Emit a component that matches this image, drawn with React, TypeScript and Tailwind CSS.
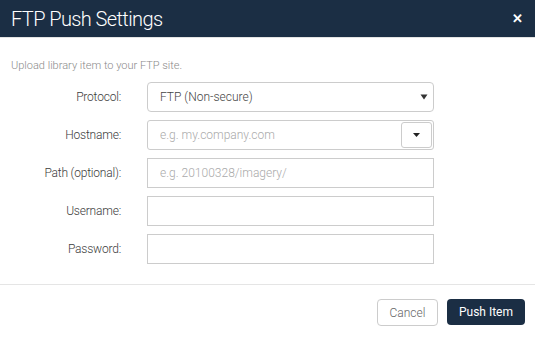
import React from "react";

const font = { fontFamily: "Roboto, 'Open Sans', 'Liberation Sans', sans-serif" };

function Row({ label, children }: { label: string; children: React.ReactNode }) {
  return (
    <div className="flex items-center h-[30px]">
      <label className="w-[121px] text-right text-[12px] text-[#3c3c3c] font-light tracking-[-0.2px]">{label}</label>
      <div className="ml-[26px] w-[287px] h-full">{children}</div>
    </div>
  );
}

export default function App() {
  return (
    <div className="w-[535px] h-[337px] bg-white overflow-hidden" style={font}>
      {/* Header */}
      <div className="h-[37px] bg-[#1b2e44] flex items-center justify-between pl-[11px] pr-[12px]">
        <h1 className="text-white text-[20px] font-light tracking-[-0.6px]">FTP Push Settings</h1>
        <span className="text-white text-[13px] font-bold leading-none">✕</span>
      </div>
      <div className="h-[1px] bg-[#e3e3e3]" />

      {/* Body */}
      <div className="pt-[21px] pb-[20px] border-b border-[#e5e5e5]">
        <p className="px-[11px] text-[11px] text-[#8a8a8a] font-light leading-[14px]">Upload library item to your FTP site.</p>

        <div className="mt-[9px] flex flex-col gap-[8px]">
          <Row label="Protocol:">
            <div className="h-full border border-[#ccc] rounded-[4px] flex items-center justify-between pl-[12px] pr-[5px]">
              <span className="text-[12px] text-[#444] font-light">FTP (Non-secure)</span>
              <svg width="8" height="6" viewBox="0 0 8 6"><path d="M0.5 0.5 H7.5 L4 5.5 Z" fill="#333" /></svg>
            </div>
          </Row>
          <Row label="Hostname:">
            <div className="h-full border border-[#ccc] rounded-[3px] flex">
              <input
                className="flex-1 min-w-0 px-[12px] text-[12px] font-light outline-none placeholder-[#aaa]"
                placeholder="e.g. my.company.com"
              />
              <button className="w-[31px] m-[1px] border border-[#ccc] rounded-[3px] flex items-center justify-center bg-white">
                <svg width="7" height="4" viewBox="0 0 7 4"><path d="M0 0 H7 L3.5 4 Z" fill="#222" /></svg>
              </button>
            </div>
          </Row>
          <Row label="Path (optional):">
            <input
              className="w-full h-full border border-[#ccc] px-[12px] text-[12px] font-light outline-none placeholder-[#aaa]"
              placeholder="e.g. 20100328/imagery/"
            />
          </Row>
          <Row label="Username:">
            <input className="w-full h-full border border-[#ccc] px-[12px] text-[12px] outline-none" />
          </Row>
          <Row label="Password:">
            <input type="password" className="w-full h-full border border-[#ccc] px-[12px] text-[12px] outline-none" />
          </Row>
        </div>
      </div>

      {/* Footer */}
      <div className="flex justify-end gap-[9px] pt-[14px] pr-[10px]">
        <button className="h-[27px] w-[61px] border border-[#ccc] rounded-[4px] text-[12px] text-[#666] font-light">Cancel</button>
        <button className="h-[26px] w-[78px] bg-[#1b2e44] rounded-[4px] text-[12px] text-white">Push Item</button>
      </div>
    </div>
  );
}
